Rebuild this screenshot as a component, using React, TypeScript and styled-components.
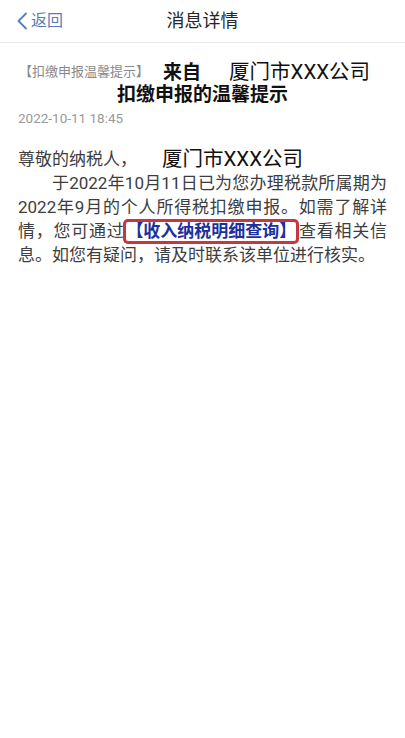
import React from 'react'
import styled, { createGlobalStyle } from 'styled-components'

const GlobalStyle = createGlobalStyle`
  html, body {
    margin: 0;
    padding: 0;
    background: #fff;
  }
  body {
    font-family: Roboto, "Noto Sans CJK SC", sans-serif;
    -webkit-font-smoothing: antialiased;
  }
`

const Page = styled.div`
  width: 405px;
  min-height: 738px;
  background: #fff;
`

const NavBar = styled.header`
  display: grid;
  grid-template-columns: 1fr auto 1fr;
  align-items: center;
  height: 42px;
  border-bottom: 1px solid #e8e8e8;
`

const BackButton = styled.div`
  display: flex;
  align-items: center;
  gap: 3px;
  padding-left: 16px;
  color: #5a7cb6;
  font-size: 16px;
  line-height: 20px;
`

const NavTitle = styled.h1`
  margin: 0;
  font-size: 18px;
  font-weight: 400;
  color: #262626;
  line-height: 24px;
`

const Content = styled.main`
  padding: 14px 18px 0;
`

const TitleRow = styled.div`
  display: flex;
  align-items: center;
  height: 26px;
`

const Tag = styled.span`
  font-size: 13px;
  color: #8a8a8a;
  margin-left: 1px;
  margin-right: 14px;
`

const TitleStrong = styled.span`
  font-size: 19px;
  font-weight: 700;
  color: #111;
`

const Company = styled.span<{ $gap: number }>`
  font-size: 20.5px;
  color: #111;
  margin-left: ${p => p.$gap}px;
`

const Subtitle = styled.div`
  text-align: center;
  font-size: 19px;
  font-weight: 700;
  color: #111;
  line-height: 24px;
`

const DateText = styled.div`
  margin-top: 2px;
  font-size: 13.5px;
  color: #9a9a9a;
  line-height: 18px;
`

const Body = styled.div`
  margin-top: 20px;
  font-size: 17px;
  line-height: 24px;
  color: #3d3d3d;
`

const Greeting = styled.div`
  display: flex;
  align-items: center;
`

const Paragraph = styled.p`
  margin: 0;
  text-indent: 2em;
  text-align: justify;
`

const Link = styled.span`
  display: inline-block;
  text-indent: 0;
  line-height: 19px;
  margin: 0 2px;
  color: #1c2f9c;
  font-weight: 700;
  background: #fff;
  border-radius: 2px;
  box-shadow: 0 0 0 3px #c8363f;
`

export default function App(): JSX.Element {
  return (
    <Page>
      <GlobalStyle />
      <NavBar>
        <BackButton>
          <svg width="12" height="18" viewBox="0 0 12 18">
            <path d="M10 1.5 L2.5 9 L10 16.5" fill="none" stroke="#5a7cb6" strokeWidth="1.8" strokeLinecap="round" strokeLinejoin="round" />
          </svg>
          返回
        </BackButton>
        <NavTitle>消息详情</NavTitle>
        <div />
      </NavBar>
      <Content>
        <TitleRow>
          <Tag>【扣缴申报温馨提示】</Tag>
          <TitleStrong>来自</TitleStrong>
          <Company $gap={28}>厦门市XXX公司</Company>
        </TitleRow>
        <Subtitle>扣缴申报的温馨提示</Subtitle>
        <DateText>2022-10-11 18:45</DateText>
        <Body>
          <Greeting>
            尊敬的纳税人，
            <Company $gap={25}>厦门市XXX公司</Company>
          </Greeting>
          <Paragraph>
            于2022年10月11日已为您办理税款所属期为2022年9月的个人所得税扣缴申报。如需了解详情，您可通过
            <Link>【收入纳税明细查询】</Link>
            查看相关信息。如您有疑问，请及时联系该单位进行核实。
          </Paragraph>
        </Body>
      </Content>
    </Page>
  )
}
